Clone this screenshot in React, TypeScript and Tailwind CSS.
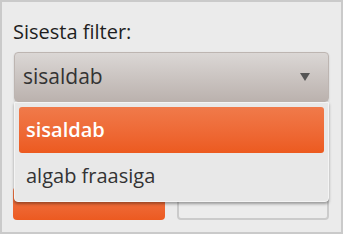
export default function App() {
  return (
    <div className="w-[343px] h-[234px] bg-[#ebebeb] border-2 border-[#cacaca] font-['Open_Sans',sans-serif] relative">
      <div className="px-[11px] pt-[15px]">
        <div className="text-[20px] leading-[30px] text-[#1e1e1e]">Sisesta filter:</div>
        <div className="mt-[5px] ml-px h-[50px] w-[315px] rounded-[4px] border border-[#bdb5b1] bg-gradient-to-b from-[#dbd7d5] to-[#bbb2ae] shadow-[0_1px_2px_rgba(0,0,0,0.15)] flex items-center justify-between pl-[8px] pr-[18px]">
          <span className="text-[21px] text-[#333]">sisaldab</span>
          <svg width="10" height="8" viewBox="0 0 10 8">
            <path d="M0 0 L10 0 L5 8 Z" fill="#555" />
          </svg>
        </div>
        <div className="mt-[85px] flex gap-[12px]">
          <div className="h-[33px] w-[152px] rounded-[4px] bg-gradient-to-b from-[#f07848] to-[#ec5a20]" />
          <div className="h-[33px] w-[152px] rounded-[4px] border-2 border-[#cbcbcb] bg-[#ececec]" />
        </div>
      </div>
      <div className="absolute left-[12px] top-[100px] w-[315px] h-[100px] bg-[#e8e8e8] border border-[#f4f4f4] rounded-b-[4px] shadow-[0_2px_3px_rgba(0,0,0,0.35)] p-[4px] pt-[4px]">
        <div className="h-[46px] rounded-[3px] bg-gradient-to-b from-[#f07a4a] to-[#ec5a1f] flex items-center pl-[7px] text-[20px] font-semibold text-white">
          sisaldab
        </div>
        <div className="h-[46px] flex items-center pl-[7px] text-[20px] text-[#333]">
          algab fraasiga
        </div>
      </div>
    </div>
  );
}
